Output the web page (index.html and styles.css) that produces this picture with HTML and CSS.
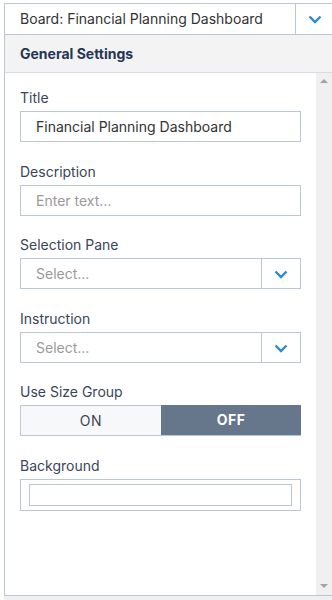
FILE: index.html
```html
<!DOCTYPE html>
<html lang="en">
<head>
  <meta charset="UTF-8">
  <meta name="viewport" content="width=device-width, initial-scale=1.0">
  <title>Board Settings</title>
  <link rel="stylesheet" href="styles.css">
</head>
<body>
  <div class="panel">
    <div class="board-select">
      <div class="board-value">Board: Financial Planning Dashboard</div>
      <div class="arrow">
        <svg width="14" height="9" viewBox="0 0 14 9"><path d="M1.5 1.5 L7 7 L12.5 1.5" fill="none" stroke="#2b8ad6" stroke-width="2.4"/></svg>
      </div>
    </div>

    <div class="section-title">General Settings</div>

    <div class="section-body">
      <div class="form">
        <div class="field">
          <label>Title</label>
          <div class="input">Financial Planning Dashboard</div>
        </div>

        <div class="field">
          <label>Description</label>
          <div class="input placeholder">Enter text...</div>
        </div>

        <div class="field">
          <label>Selection Pane</label>
          <div class="select">
            <div class="select-value">Select...</div>
            <div class="arrow">
              <svg width="14" height="9" viewBox="0 0 14 9"><path d="M1.5 1.5 L7 7 L12.5 1.5" fill="none" stroke="#2b8ad6" stroke-width="2.4"/></svg>
            </div>
          </div>
        </div>

        <div class="field">
          <label>Instruction</label>
          <div class="select">
            <div class="select-value">Select...</div>
            <div class="arrow">
              <svg width="14" height="9" viewBox="0 0 14 9"><path d="M1.5 1.5 L7 7 L12.5 1.5" fill="none" stroke="#2b8ad6" stroke-width="2.4"/></svg>
            </div>
          </div>
        </div>

        <div class="field">
          <label>Use Size Group</label>
          <div class="toggle">
            <div class="toggle-on">ON</div>
            <div class="toggle-off">OFF</div>
          </div>
        </div>

        <div class="field">
          <label>Background</label>
          <div class="color-box">
            <div class="color-inner"></div>
          </div>
        </div>
      </div>

      <div class="scrollbar">
        <div class="scroll-up"></div>
        <div class="scroll-down"></div>
      </div>
    </div>
  </div>
  <div class="strip"></div>
</body>
</html>
```

FILE: styles.css
```css
html, body {
  margin: 0;
  padding: 0;
  font-family: 'Inter', 'Liberation Sans', sans-serif;
  font-size: 14px;
}

body {
  background: #fff;
  overflow: hidden;
  height: 600px;
}

.panel {
  margin: 3px 0 0 4px;
  border: 1px solid #b9c6d6;
  border-right: none;
  width: 340px;
}

.board-select {
  display: flex;
  height: 30px;
  border-bottom: 1px solid #b9c6d6;
  width: 328px;
}

.board-value {
  flex: 1;
  padding-left: 15px;
  line-height: 30px;
  color: #333;
}

.board-select .arrow {
  width: 37px;
  border-left: 1px solid #b9c6d6;
  display: flex;
  align-items: center;
  justify-content: center;
  padding-top: 1px;
}

.section-title {
  height: 37px;
  line-height: 37px;
  background: #f3f3f3;
  border-bottom: 1px solid #d6dde6;
  padding-left: 15px;
  font-weight: 700;
  color: #253655;
  width: 312px;
}

.section-body {
  display: flex;
  height: 522px;
  width: 327px;
}

.form {
  flex: 1;
  padding: 16px 15px 0 15px;
}

.field {
  margin-bottom: 20.6px;
}

.field label {
  display: block;
  line-height: 17px;
  margin-bottom: 5px;
  color: #3a4557;
}

.input {
  height: 29px;
  line-height: 29px;
  border: 1px solid #b9c6d6;
  padding-left: 15px;
  color: #333;
}

.placeholder, .select-value {
  color: #9a9a9a;
}

.select {
  display: flex;
  height: 29px;
  border: 1px solid #b9c6d6;
}

.select-value {
  flex: 1;
  padding-left: 15px;
  line-height: 29px;
}

.select .arrow {
  width: 38px;
  border-left: 1px solid #b9c6d6;
  display: flex;
  align-items: center;
  justify-content: center;
  padding-top: 2px;
}

.toggle {
  display: flex;
  height: 31px;
}

.toggle-on, .toggle-off {
  flex: 1;
  text-align: center;
  letter-spacing: 0.5px;
}

.toggle-on {
  background: #f6f8fa;
  border: 1px solid #b9c6d6;
  border-right: none;
  line-height: 29px;
  color: #3e4652;
}

.toggle-off {
  background: #66768b;
  border-bottom: 1px solid #b9c6d6;
  line-height: 30px;
  color: #fff;
  font-weight: 700;
}

.color-box {
  height: 22px;
  border: 1px solid #b9c6d6;
  padding: 4px 8px 4px 8px;
}

.color-inner {
  height: 20px;
  border: 1px solid #b9c6d6;
}

.scrollbar {
  width: 16px;
  background: #f0f0f0;
  display: flex;
  flex-direction: column;
  justify-content: space-between;
  align-items: center;
  padding: 6px 0 7px 0;
}

.scroll-up {
  width: 0;
  height: 0;
  border-left: 4px solid transparent;
  border-right: 4px solid transparent;
  border-bottom: 4px solid #a3a3a3;
}

.scroll-down {
  width: 0;
  height: 0;
  border-left: 4px solid transparent;
  border-right: 4px solid transparent;
  border-top: 4px solid #a3a3a3;
}

.strip {
  margin-left: 4px;
  height: 10px;
  background: #eef0f3;
}
```
